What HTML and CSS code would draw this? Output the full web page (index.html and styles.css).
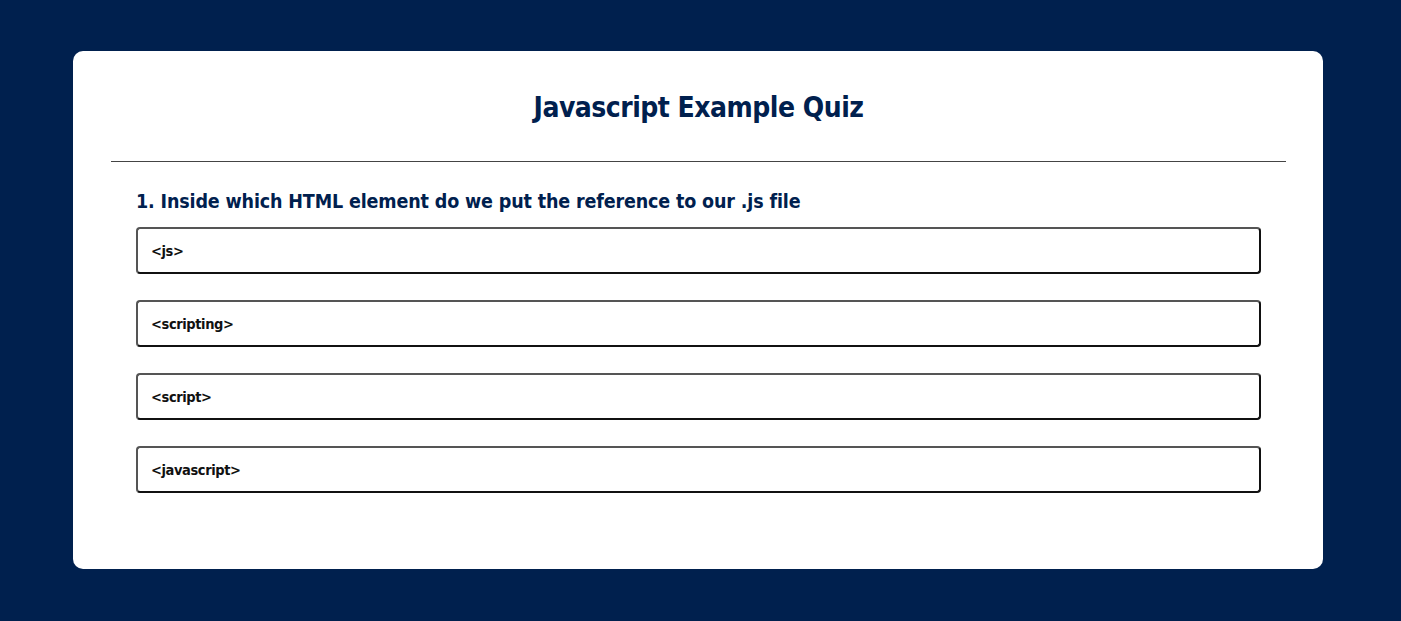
FILE: index.html
```html
<!DOCTYPE html>
<html lang="en">
<head>
<meta charset="utf-8">
<title>Javascript Example Quiz</title>
<link rel="stylesheet" href="styles.css">
</head>
<body>
  <main class="card">
    <h1 class="title">Javascript Example Quiz</h1>
    <hr class="divider">
    <section class="question">
      <h2 class="question-text">1. Inside which HTML element do we put the reference to our .js file</h2>
      <div class="answers">
        <button class="answer">&lt;js&gt;</button>
        <button class="answer">&lt;scripting&gt;</button>
        <button class="answer">&lt;script&gt;</button>
        <button class="answer">&lt;javascript&gt;</button>
      </div>
    </section>
  </main>
</body>
</html>
```
FILE: styles.css
```css
html, body {
  margin: 0;
  padding: 0;
}
body {
  background: #00204e;
  font-family: "DejaVu Sans Condensed", "Liberation Sans", sans-serif;
  padding: 51px 0 52px 73px;
}
.card {
  box-sizing: border-box;
  width: 1250px;
  height: 518px;
  background: #ffffff;
  border-radius: 10px;
  padding: 38px 37px 0 38px;
}
.title {
  margin: 0;
  text-align: center;
  color: #00204e;
  font-size: 28px;
  letter-spacing: -0.5px;
  font-weight: bold;
  line-height: 38px;
}
.divider {
  margin: 34px 0 0;
  border: 0;
  border-top: 1px solid #444;
  height: 0;
}
.question {
  padding: 27px 25px 0;
}
.question-text {
  margin: 0 0 12px;
  color: #00204e;
  font-size: 19.5px;
  letter-spacing: -0.15px;
  font-weight: bold;
  line-height: 26px;
}
.answers {
  display: flex;
  flex-direction: column;
  gap: 26px;
}
.answer {
  box-sizing: border-box;
  height: 47px;
  width: 100%;
  text-align: left;
  padding: 0 13px;
  background: #fff;
  border: 2px solid #555;
  border-right-color: #111;
  border-bottom-color: #111;
  border-radius: 4px;
  font-family: inherit;
  font-size: 14.5px;
  letter-spacing: -0.4px;
  font-weight: bold;
  color: #111;
}
```
